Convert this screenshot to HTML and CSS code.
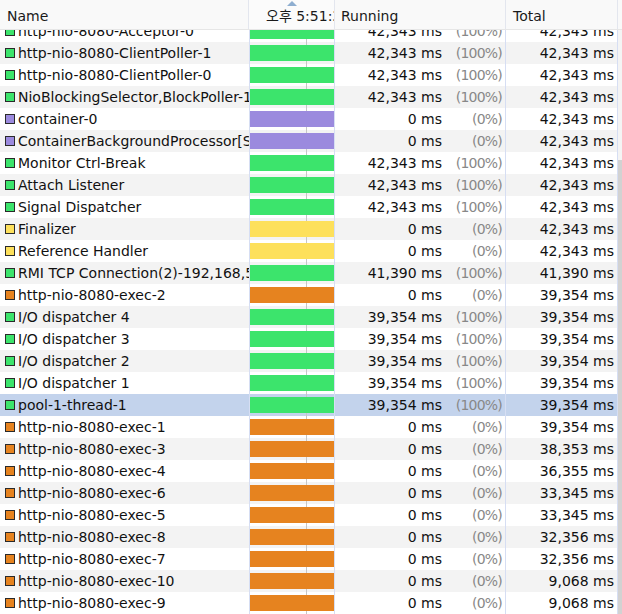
FILE: index.html
```html
<!DOCTYPE html>
<html lang="ko">
<head>
<meta charset="utf-8">
<title>Threads</title>
<link rel="stylesheet" href="styles.css">
</head>
<body>
<div class="table">
  <div class="head">
    <div class="hcell hname">Name</div>
    <div class="hcell htl"><span class="sort"></span><span class="htltext">오후 5:51:30</span></div>
    <div class="hcell hrun">Running</div>
    <div class="hcell htot">Total</div>
    <div class="hfill"></div>
  </div>
  <div class="bodywrap">
    <div class="rows">
      <div class="list">
        <div class="row"><div class="name"><i class="sq green"></i><span>http-nio-8080-Acceptor-0</span></div><div class="tl"><div class="bar green"></div></div><div class="run"><span class="num">42,343 ms</span><span class="pct">(100%)</span></div><div class="tot">42,343 ms</div></div>
        <div class="row alt"><div class="name"><i class="sq green"></i><span>http-nio-8080-ClientPoller-1</span></div><div class="tl"><div class="bar green"></div></div><div class="run"><span class="num">42,343 ms</span><span class="pct">(100%)</span></div><div class="tot">42,343 ms</div></div>
        <div class="row"><div class="name"><i class="sq green"></i><span>http-nio-8080-ClientPoller-0</span></div><div class="tl"><div class="bar green"></div></div><div class="run"><span class="num">42,343 ms</span><span class="pct">(100%)</span></div><div class="tot">42,343 ms</div></div>
        <div class="row alt"><div class="name"><i class="sq green"></i><span>NioBlockingSelector,BlockPoller-1</span></div><div class="tl"><div class="bar green"></div></div><div class="run"><span class="num">42,343 ms</span><span class="pct">(100%)</span></div><div class="tot">42,343 ms</div></div>
        <div class="row"><div class="name"><i class="sq purple"></i><span>container-0</span></div><div class="tl"><div class="bar purple"></div></div><div class="run"><span class="num">0 ms</span><span class="pct">(0%)</span></div><div class="tot">42,343 ms</div></div>
        <div class="row alt"><div class="name"><i class="sq purple"></i><span>ContainerBackgroundProcessor[StandardEngine[Catalina]]</span></div><div class="tl"><div class="bar purple"></div></div><div class="run"><span class="num">0 ms</span><span class="pct">(0%)</span></div><div class="tot">42,343 ms</div></div>
        <div class="row"><div class="name"><i class="sq green"></i><span>Monitor Ctrl-Break</span></div><div class="tl"><div class="bar green"></div></div><div class="run"><span class="num">42,343 ms</span><span class="pct">(100%)</span></div><div class="tot">42,343 ms</div></div>
        <div class="row alt"><div class="name"><i class="sq green"></i><span>Attach Listener</span></div><div class="tl"><div class="bar green"></div></div><div class="run"><span class="num">42,343 ms</span><span class="pct">(100%)</span></div><div class="tot">42,343 ms</div></div>
        <div class="row"><div class="name"><i class="sq green"></i><span>Signal Dispatcher</span></div><div class="tl"><div class="bar green"></div></div><div class="run"><span class="num">42,343 ms</span><span class="pct">(100%)</span></div><div class="tot">42,343 ms</div></div>
        <div class="row alt"><div class="name"><i class="sq yellow"></i><span>Finalizer</span></div><div class="tl"><div class="bar yellow"></div></div><div class="run"><span class="num">0 ms</span><span class="pct">(0%)</span></div><div class="tot">42,343 ms</div></div>
        <div class="row"><div class="name"><i class="sq yellow"></i><span>Reference Handler</span></div><div class="tl"><div class="bar yellow"></div></div><div class="run"><span class="num">0 ms</span><span class="pct">(0%)</span></div><div class="tot">42,343 ms</div></div>
        <div class="row alt"><div class="name"><i class="sq green"></i><span>RMI TCP Connection(2)-192,168,56,1</span></div><div class="tl"><div class="bar green"></div></div><div class="run"><span class="num">41,390 ms</span><span class="pct">(100%)</span></div><div class="tot">41,390 ms</div></div>
        <div class="row"><div class="name"><i class="sq orange"></i><span>http-nio-8080-exec-2</span></div><div class="tl"><div class="bar orange"></div></div><div class="run"><span class="num">0 ms</span><span class="pct">(0%)</span></div><div class="tot">39,354 ms</div></div>
        <div class="row alt"><div class="name"><i class="sq green"></i><span>I/O dispatcher 4</span></div><div class="tl"><div class="bar green"></div></div><div class="run"><span class="num">39,354 ms</span><span class="pct">(100%)</span></div><div class="tot">39,354 ms</div></div>
        <div class="row"><div class="name"><i class="sq green"></i><span>I/O dispatcher 3</span></div><div class="tl"><div class="bar green"></div></div><div class="run"><span class="num">39,354 ms</span><span class="pct">(100%)</span></div><div class="tot">39,354 ms</div></div>
        <div class="row alt"><div class="name"><i class="sq green"></i><span>I/O dispatcher 2</span></div><div class="tl"><div class="bar green"></div></div><div class="run"><span class="num">39,354 ms</span><span class="pct">(100%)</span></div><div class="tot">39,354 ms</div></div>
        <div class="row"><div class="name"><i class="sq green"></i><span>I/O dispatcher 1</span></div><div class="tl"><div class="bar green"></div></div><div class="run"><span class="num">39,354 ms</span><span class="pct">(100%)</span></div><div class="tot">39,354 ms</div></div>
        <div class="row sel"><div class="name"><i class="sq green"></i><span>pool-1-thread-1</span></div><div class="tl"><div class="bar green"></div></div><div class="run"><span class="num">39,354 ms</span><span class="pct">(100%)</span></div><div class="tot">39,354 ms</div></div>
        <div class="row"><div class="name"><i class="sq orange"></i><span>http-nio-8080-exec-1</span></div><div class="tl"><div class="bar orange"></div></div><div class="run"><span class="num">0 ms</span><span class="pct">(0%)</span></div><div class="tot">39,354 ms</div></div>
        <div class="row alt"><div class="name"><i class="sq orange"></i><span>http-nio-8080-exec-3</span></div><div class="tl"><div class="bar orange"></div></div><div class="run"><span class="num">0 ms</span><span class="pct">(0%)</span></div><div class="tot">38,353 ms</div></div>
        <div class="row"><div class="name"><i class="sq orange"></i><span>http-nio-8080-exec-4</span></div><div class="tl"><div class="bar orange"></div></div><div class="run"><span class="num">0 ms</span><span class="pct">(0%)</span></div><div class="tot">36,355 ms</div></div>
        <div class="row alt"><div class="name"><i class="sq orange"></i><span>http-nio-8080-exec-6</span></div><div class="tl"><div class="bar orange"></div></div><div class="run"><span class="num">0 ms</span><span class="pct">(0%)</span></div><div class="tot">33,345 ms</div></div>
        <div class="row"><div class="name"><i class="sq orange"></i><span>http-nio-8080-exec-5</span></div><div class="tl"><div class="bar orange"></div></div><div class="run"><span class="num">0 ms</span><span class="pct">(0%)</span></div><div class="tot">33,345 ms</div></div>
        <div class="row alt"><div class="name"><i class="sq orange"></i><span>http-nio-8080-exec-8</span></div><div class="tl"><div class="bar orange"></div></div><div class="run"><span class="num">0 ms</span><span class="pct">(0%)</span></div><div class="tot">32,356 ms</div></div>
        <div class="row"><div class="name"><i class="sq orange"></i><span>http-nio-8080-exec-7</span></div><div class="tl"><div class="bar orange"></div></div><div class="run"><span class="num">0 ms</span><span class="pct">(0%)</span></div><div class="tot">32,356 ms</div></div>
        <div class="row alt"><div class="name"><i class="sq orange"></i><span>http-nio-8080-exec-10</span></div><div class="tl"><div class="bar orange"></div></div><div class="run"><span class="num">0 ms</span><span class="pct">(0%)</span></div><div class="tot">9,068 ms</div></div>
        <div class="row"><div class="name"><i class="sq orange"></i><span>http-nio-8080-exec-9</span></div><div class="tl"><div class="bar orange"></div></div><div class="run"><span class="num">0 ms</span><span class="pct">(0%)</span></div><div class="tot">9,068 ms</div></div>
      </div>
    </div>
    <div class="scroll"><div class="track"></div><div class="thumb"></div></div>
  </div>
</div>
</body>
</html>
```

FILE: styles.css
```css
html, body {
  margin: 0;
  padding: 0;
  background: #ffffff;
}
body {
  font-family: "DejaVu Sans", "Noto Sans CJK KR", sans-serif;
  font-size: 14px;
  color: #111111;
}
.table {
  width: 622px;
  height: 614px;
  overflow: hidden;
  display: flex;
  flex-direction: column;
}
.head {
  display: grid;
  grid-template-columns: 249px 86px 171px 112px 4px;
  height: 29px;
  border-bottom: 1px solid #e6e6e6;
  background: #f9f9f9;
  flex: none;
}
.hcell {
  line-height: 33px;
  white-space: nowrap;
  overflow: hidden;
  color: #1a1a1a;
  border-right: 1px solid #e3e6ee;
}
.hname { padding-left: 7px; }
.htl {
  position: relative;
  padding-left: 17px;
  background: #fbfbfb;
}
.sort {
  position: absolute;
  left: 38px;
  top: 1px;
  width: 0;
  height: 0;
  border-left: 5px solid transparent;
  border-right: 5px solid transparent;
  border-bottom: 5px solid #8eaed0;
}
.hrun { padding-left: 6px; }
.htot { padding-left: 7px; }
.hfill { background: #f9f9f9; }

.bodywrap {
  flex: 1;
  display: flex;
  min-height: 0;
}
.rows {
  width: 618px;
  overflow: hidden;
}
.list {
  margin-top: -10px;
}
.row {
  display: grid;
  grid-template-columns: 249px 86px 171px 112px;
  height: 22px;
  line-height: 22px;
  background: #ffffff;
  overflow: hidden;
}
.row.alt { background: #f3f3f3; }
.row.sel { background: #c3d3ec; }

.name {
  display: flex;
  align-items: center;
  gap: 3px;
  padding-left: 5px;
  white-space: nowrap;
  overflow: hidden;
}
.sq {
  flex: none;
  width: 8px;
  height: 8px;
  border: 1px solid #2a2a2a;
}
.tl {
  border-left: 1px solid #d6def3;
  border-right: 1px solid #d6def3;
  padding: 3px 0;
  background-image: linear-gradient(to right, transparent 56px, #c6c6c6 56px, #c6c6c6 57px, transparent 57px);
}
.bar { height: 16px; }
.green { background-color: #3ce46c; }
.purple { background-color: #9b8ade; }
.yellow { background-color: #fde05b; }
.orange { background-color: #e6831f; }

.run {
  display: flex;
  justify-content: flex-end;
  padding-right: 3px;
  border-right: 1px solid #d6def3;
  white-space: nowrap;
}
.pct {
  width: 60px;
  text-align: right;
  color: #888888;
  letter-spacing: -0.8px;
}
.tot {
  text-align: right;
  padding-right: 3px;
  border-right: 1px solid #d6def3;
  white-space: nowrap;
}
.scroll {
  width: 4px;
  display: flex;
  flex-direction: column;
}
.track {
  height: 130px;
  background: #f4f4f4;
}
.thumb {
  flex: 1;
  background: #d2d2d2;
}
```
